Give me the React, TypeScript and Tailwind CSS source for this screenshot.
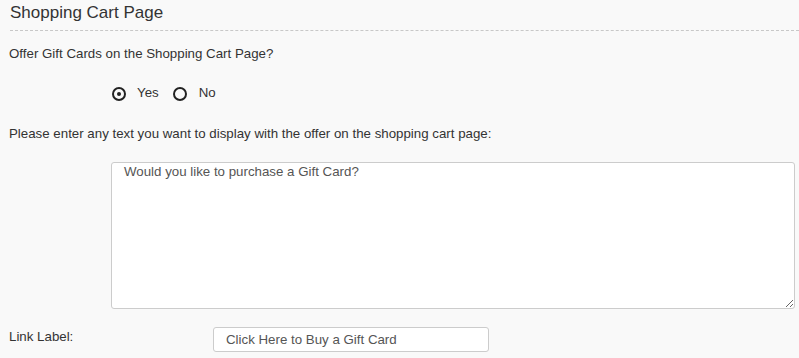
import React from "react";

export default function App() {
  return (
    <div
      className="w-[799px] h-[358px] bg-[#f9f9f9] text-[#333] overflow-hidden"
      style={{ fontFamily: '"Liberation Sans", Arial, sans-serif' }}
    >
      <div className="pl-[10px] pt-[2px]">
        <h2 className="text-[17px] leading-[22px] text-[#333]">Shopping Cart Page</h2>
        <div className="mt-[6px] border-b border-dashed border-[#c8c8c8]" />
      </div>
      <div className="pl-[9px] pt-[15px] text-[13.3px] leading-[16px]">
        Offer Gift Cards on the Shopping Cart Page?
      </div>
      <div className="flex items-center pl-[112px] pt-[25px] text-[13.3px] leading-[16px]">
        <label className="flex items-center">
          <span className="w-[14px] h-[14px] rounded-full border-2 border-[#222] flex items-center justify-center">
            <span className="w-[4px] h-[4px] rounded-full bg-[#222]" />
          </span>
          <span className="ml-[11px] -mt-[3px]">Yes</span>
        </label>
        <label className="flex items-center ml-[14px]">
          <span className="w-[14px] h-[14px] rounded-full border-2 border-[#222]" />
          <span className="ml-[12px] -mt-[3px]">No</span>
        </label>
      </div>
      <div className="pl-[9px] pt-[25px] text-[13.3px] leading-[16px]">
        Please enter any text you want to display with the offer on the shopping cart page:
      </div>
      <div className="pl-[111px] pr-[4px] pt-[20px]">
        <textarea
          className="block w-full h-[147px] bg-white border border-[#ccc] rounded-[3px] px-[12px] pt-[0px] text-[13.3px] leading-[18px] text-[#555] outline-none resize-y"
          style={{ fontFamily: '"Liberation Sans", Arial, sans-serif' }}
          defaultValue="Would you like to purchase a Gift Card?"
        />
      </div>
      <div className="flex items-center pl-[9px] pt-[18px] text-[13.3px] leading-[16px]">
        <span className="w-[204px] -mt-[6px]">Link Label:</span>
        <input
          className="w-[276px] h-[25px] bg-white border border-[#ccc] rounded-[3px] px-[12px] text-[13.3px] text-[#555] outline-none"
          style={{ fontFamily: '"Liberation Sans", Arial, sans-serif' }}
          defaultValue="Click Here to Buy a Gift Card"
        />
      </div>
    </div>
  );
}
